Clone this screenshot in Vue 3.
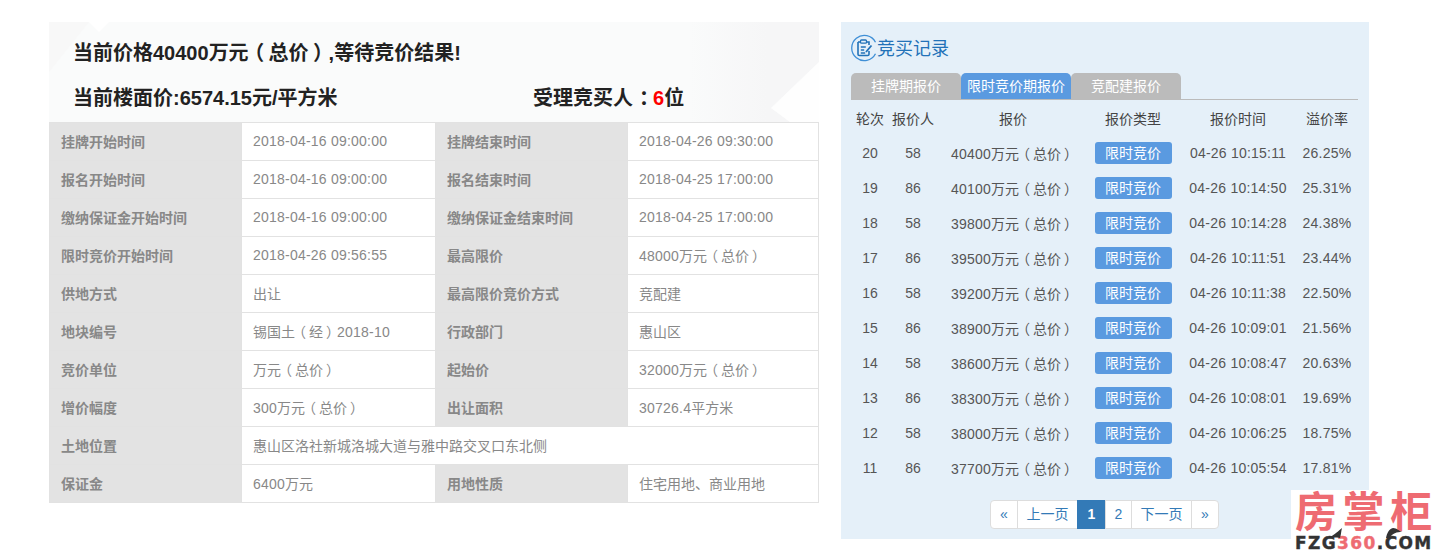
<script setup>
const rows = [
  [['挂牌开始时间', '2018-04-16 09:00:00'], ['挂牌结束时间', '2018-04-26 09:30:00']],
  [['报名开始时间', '2018-04-16 09:00:00'], ['报名结束时间', '2018-04-25 17:00:00']],
  [['缴纳保证金开始时间', '2018-04-16 09:00:00'], ['缴纳保证金结束时间', '2018-04-25 17:00:00']],
  [['限时竞价开始时间', '2018-04-26 09:56:55'], ['最高限价', '48000万元（总价）']],
  [['供地方式', '出让'], ['最高限价竞价方式', '竞配建']],
  [['地块编号', '锡国土（经）2018-10'], ['行政部门', '惠山区']],
  [['竞价单位', '万元（总价）'], ['起始价', '32000万元（总价）']],
  [['增价幅度', '300万元（总价）'], ['出让面积', '30726.4平方米']],
  [['土地位置', '惠山区洛社新城洛城大道与雅中路交叉口东北侧']],
  [['保证金', '6400万元'], ['用地性质', '住宅用地、商业用地']],
]
const bids = [
  [20, 58, 40400, '10:15:11', '26.25%'],
  [19, 86, 40100, '10:14:50', '25.31%'],
  [18, 58, 39800, '10:14:28', '24.38%'],
  [17, 86, 39500, '10:11:51', '23.44%'],
  [16, 58, 39200, '10:11:38', '22.50%'],
  [15, 86, 38900, '10:09:01', '21.56%'],
  [14, 58, 38600, '10:08:47', '20.63%'],
  [13, 86, 38300, '10:08:01', '19.69%'],
  [12, 58, 38000, '10:06:25', '18.75%'],
  [11, 86, 37700, '10:05:54', '17.81%'],
]
const tabs = ['挂牌期报价', '限时竞价期报价', '竞配建报价']
const pages = [
  { t: '«', w: 28 }, { t: '上一页', w: 61 }, { t: '1', w: 29, on: true },
  { t: '2', w: 27 }, { t: '下一页', w: 61 }, { t: '»', w: 28 },
]
// Split a string so fullwidth punctuation and Latin runs can follow the reference's metrics.
const seg = (text) =>
  String(text)
    .split(/([（）：]|[0-9A-Za-z.:%\- ]+)/)
    .filter(Boolean)
    .map((t) => ({
      t,
      c: t === '（' ? 'lp' : t === '）' ? 'rp' : t === '：' ? 'col' : /^[0-9A-Za-z.:%\- ]+$/.test(t) ? 'lat' : '',
    }))
</script>

<template>
  <div class="page">
    <section class="left">
      <svg class="pattern" width="770" height="100" viewBox="0 0 770 100" aria-hidden="true">
        <defs>
          <linearGradient id="fade" x1="0" y1="0" x2="1" y2="0">
            <stop offset="0" stop-color="#f6f6f7" stop-opacity="0" />
            <stop offset="0.6" stop-color="#f6f6f7" />
          </linearGradient>
        </defs>
        <polygon points="0,0 40,0 0,50" fill="#f8f8f8" />
        <polygon points="40,0 60,0 50,10" fill="#ffffff" />
        <polygon points="640,0 770,0 770,40 722,86 741,100 640,100" fill="url(#fade)" />
        <polygon points="770,40 722,86 741,100 770,100" fill="#fefefe" />
      </svg>
      <div class="head">
        <h2 class="title"><span v-for="(s, i) in seg('当前价格40400万元（总价）,等待竞价结果!')" :key="i" :class="s.c">{{ s.t }}</span></h2>
        <div class="sub">
          <span class="sub-a">当前楼面价:6574.15元/平方米</span>
          <span>受理竞买人<span class="col">：</span><b class="red">6</b>位</span>
        </div>
      </div>
      <table class="info">
        <colgroup>
          <col class="c1" /><col class="c2" /><col class="c3" /><col class="c4" />
        </colgroup>
        <tbody>
          <tr v-for="(r, i) in rows" :key="i">
            <template v-for="(c, j) in r" :key="j">
              <th>{{ c[0] }}</th>
              <td :colspan="r.length === 1 ? 3 : 1"><span v-for="(s, k) in seg(c[1])" :key="k" :class="s.c">{{ s.t }}</span></td>
            </template>
          </tr>
        </tbody>
      </table>
    </section>

    <section class="right">
      <h3 class="rec-title">
        <svg class="rec-icon" width="28" height="28" viewBox="0 0 28 28" aria-hidden="true">
          <path d="M25.5 8.2A12.6 12.6 0 1 0 25.5 19.8" fill="none" stroke="#3f8fd6" stroke-width="1.3" />
          <path d="M8 8h11v3M19 17v3.2a1.3 1.3 0 0 1-1.3 1.3H9.3A1.3 1.3 0 0 1 8 20.2V8" fill="none" stroke="#2272b8" stroke-width="1.6" />
          <rect x="10.5" y="6" width="6" height="3.2" rx="1" fill="#e5f0f9" stroke="#2272b8" stroke-width="1.3" />
          <path d="M10.8 13h5M10.8 16h3.4M10.8 19h4.4" stroke="#2272b8" stroke-width="1.3" fill="none" />
          <path d="M21.5 11.5l-5.5 6.5" stroke="#2272b8" stroke-width="1.8" fill="none" />
        </svg>
        <span class="rec-text">竞买记录</span>
      </h3>
      <div class="tabs">
        <span v-for="(t, i) in tabs" :key="t" class="tab" :class="{ active: i === 1 }">{{ t }}</span>
      </div>
      <table class="bids">
        <colgroup>
          <col class="b1" /><col class="b2" /><col class="b3" /><col class="b4" /><col class="b5" /><col class="b6" />
        </colgroup>
        <thead>
          <tr>
            <th>轮次</th><th>报价人</th><th>报价</th><th>报价类型</th><th>报价时间</th><th>溢价率</th>
          </tr>
        </thead>
        <tbody>
          <tr v-for="b in bids" :key="b[0]">
            <td>{{ b[0] }}</td>
            <td>{{ b[1] }}</td>
            <td><span v-for="(s, k) in seg(b[2] + '万元（总价）')" :key="k" :class="s.c">{{ s.t }}</span></td>
            <td><span class="badge">限时竞价</span></td>
            <td><span class="lat">04-26 {{ b[3] }}</span></td>
            <td><span class="lat">{{ b[4] }}</span></td>
          </tr>
        </tbody>
      </table>
      <nav class="pager">
        <a v-for="p in pages" :key="p.t" class="pg" :class="{ on: p.on }" :style="{ width: p.w + 'px' }">{{ p.t }}</a>
      </nav>
    </section>

    <div class="mark">
      <svg class="wing w1" width="13" height="10" viewBox="0 0 13 10" aria-hidden="true">
        <path d="M0 9C4 8 7 5 13 0C12 4 12 7 11 10C7 9 3 10 0 9Z" fill="#333" />
      </svg>
      <svg class="wing w2" width="16" height="10" viewBox="0 0 16 10" aria-hidden="true">
        <path d="M0 10C1 5 3 1 7 0C11 0 13 3 16 4C11 4 6 5 4 10Z" fill="#333" />
      </svg>
      <div class="mark-cn">房掌柜</div>
      <div class="mark-en">FZG<i>360</i>.COM</div>
    </div>
  </div>
</template>

<style>
html, body { margin: 0; background: #fff; }
</style>

<style scoped>
.page {
  position: relative;
  display: flex;
  align-items: flex-start;
  gap: 22px;
  width: 1442px;
  height: 557px;
  padding: 22px 0 0 49px;
  box-sizing: border-box;
  overflow: hidden;
  font-family: "Liberation Sans", "Noto Sans CJK SC", sans-serif;
  font-size: 14px;
  color: #333;
}
.left {
  position: relative;
  width: 770px;
  background: #fafbfb;
}
.pattern { position: absolute; left: 0; top: 0; }
.head { position: relative; height: 100px; padding-left: 24px; box-sizing: border-box; color: #222; }
.title { margin: 0; padding-top: 17px; font-size: 20px; line-height: 29px; font-weight: bold; }
.sub { display: flex; margin-top: 16px; font-size: 20px; line-height: 29px; font-weight: bold; }
.sub-a { width: 460px; }
.red { color: #f00; }
.lp, .rp, .col { font-feature-settings: "halt"; }
.lp { margin: 0 0.22em 0 0.28em; }
.rp { margin: 0 0.28em 0 0.22em; }
.col { margin: 0 0.2em 0 0.3em; }
.info {
  position: relative;
  width: 769px;
  table-layout: fixed;
  border-collapse: collapse;
  background: #fff;
}
.c1 { width: 192px; }
.c2 { width: 194px; }
.c3 { width: 192px; }
.c4 { width: 191px; }
.info th, .info td {
  height: 35px;
  padding: 0 11px 2px;
  border: 1px solid #e2e2e2;
  text-align: left;
  color: #888;
  font-size: 14px;
  box-sizing: content-box;
}
.info th { background: #e3e3e3; font-weight: bold; }
.info td .lat, .bids td .lat { letter-spacing: 0.22px; }
.right {
  width: 528px;
  height: 517px;
  padding: 0 11px 0 10px;
  box-sizing: border-box;
  background: #e5f0f9;
}
.rec-title {
  display: flex;
  align-items: center;
  height: 51px;
  margin: 0;
  font-size: 18px;
  font-weight: normal;
  color: #2272b8;
}
.rec-icon { flex: none; margin: 1px -1px 0 -1px; }
.rec-text { padding-bottom: 2px; }
.tabs {
  display: flex;
  height: 26px;
  border-bottom: 1px solid #bbb;
}
.tab {
  width: 110px;
  height: 26px;
  border-radius: 5px 5px 0 0;
  background: #bbb;
  color: #fff;
  text-align: center;
  font-size: 14px;
  line-height: 26px;
}
.tab.active { background: #5a9ae0; }
.bids {
  width: 504px;
  table-layout: fixed;
  border-collapse: collapse;
  color: #555;
}
.b1 { width: 38px; } .b2 { width: 48px; } .b3 { width: 152px; }
.b4 { width: 88px; } .b5 { width: 122px; } .b6 { width: 56px; }
.bids th, .bids td { padding: 0; text-align: center; font-size: 14px; font-weight: normal; }
.bids th { height: 35px; color: #444; }
.bids td { height: 35px; }
.badge {
  display: inline-block;
  width: 77px;
  height: 22px;
  border-radius: 3px;
  background: #5a9ae0;
  color: #fff;
  line-height: 22px;
  vertical-align: middle;
}
.pager {
  display: flex;
  justify-content: center;
  width: 507px;
  margin-top: 15px;
}
.pg {
  height: 29px;
  margin-left: -1px;
  border: 1px solid #ddd;
  box-sizing: border-box;
  background: #fff;
  color: #337ab7;
  text-align: center;
  line-height: 27px;
}
.pg:first-child { margin-left: 0; border-radius: 4px 0 0 4px; }
.pg:last-child { border-radius: 0 4px 4px 0; }
.pg.on { background: #337ab7; border-color: #337ab7; color: #fff; font-weight: bold; }
.mark {
  position: absolute;
  left: 1291px;
  top: 490px;
  width: 151px;
  height: 67px;
  background: #fff;
  color: #ee6b72;
}
.wing { position: absolute; top: 38px; }
.w1 { left: 38px; }
.w2 { left: 95px; }
.mark-cn { padding: 1px 0 0 4px; font-size: 42px; line-height: 44px; letter-spacing: 5.6px; font-weight: bold; white-space: nowrap; }
.mark-en { margin-top: -1px; padding-left: 4px; font-size: 17px; line-height: 18px; font-weight: bold; color: #333; letter-spacing: 1.4px; white-space: nowrap; font-family: "DejaVu Sans", sans-serif; -webkit-text-stroke: 0.4px currentColor; }
.mark-en i { font-style: normal; color: #ee6b72; }
</style>
